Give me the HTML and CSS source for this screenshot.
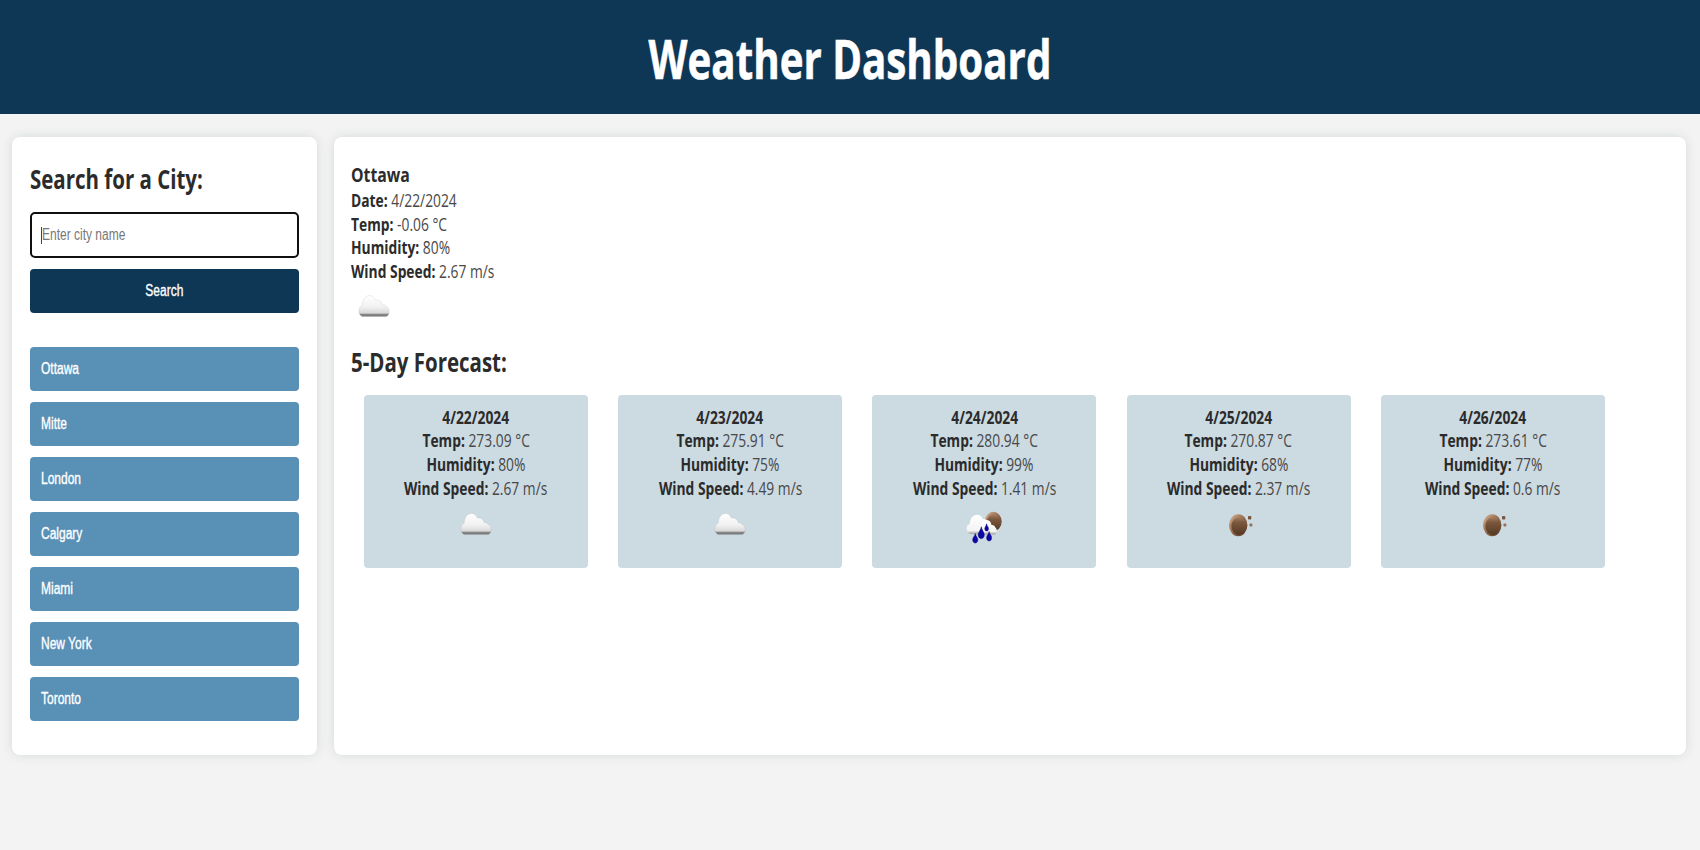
FILE: index.html
```
<!DOCTYPE html>
<html lang="en">
<head>
<meta charset="utf-8">
<title>Weather Dashboard</title>
<link rel="stylesheet" href="styles.css">
</head>
<body>
<svg class="defs" width="0" height="0" aria-hidden="true">
  <defs>
    <linearGradient id="cloudFill" x1="0" y1="0" x2="0" y2="1">
      <stop offset="0" stop-color="#fff"/><stop offset=".55" stop-color="#f1f1f1"/><stop offset=".84" stop-color="#d8d8d8"/><stop offset=".89" stop-color="#888"/><stop offset="1" stop-color="#777"/>
    </linearGradient>
    <linearGradient id="whiteFill" x1="0" y1="0" x2="0" y2="1">
      <stop offset="0" stop-color="#fff"/><stop offset=".8" stop-color="#f4f4f4"/><stop offset="1" stop-color="#999"/>
    </linearGradient>
    <linearGradient id="moonRim" x1="0" y1="0" x2="1" y2="1">
      <stop offset="0" stop-color="#d9b597"/><stop offset=".5" stop-color="#94684a"/><stop offset="1" stop-color="#4b3120"/>
    </linearGradient>
    <linearGradient id="moonFill" x1="0" y1="0" x2="0" y2="1">
      <stop offset="0" stop-color="#a58063"/><stop offset=".3" stop-color="#7b573d"/><stop offset="1" stop-color="#553923"/>
    </linearGradient>
    <symbol id="cloud" viewBox="0 0 48 54">
      <path d="M12 34.500C10 33.500 8.800 31.300 8.900 28.500C9 25.700 10.300 24.100 12.200 23.300C12.400 17.500 15.500 13.600 19.500 13.600C22.300 13.600 24.300 15.200 25.400 18C28.800 17.400 31.600 19.300 32.300 22.800C34.200 22.400 35.600 23 36 24.600C38 25 39.200 27 39.200 29.500C39.200 32 38 34 36.400 34.500Z" fill="url(#cloudFill)" stroke="#999" stroke-opacity=".25" stroke-width=".7"/>
    </symbol>
    <symbol id="moon" viewBox="0 0 48 54">
      <ellipse cx="23.200" cy="25.300" rx="9.200" ry="11" fill="url(#moonRim)"/>
      <ellipse cx="23.800" cy="26" rx="7.400" ry="9" fill="url(#moonFill)"/>
      <rect x="33" y="16" width="3.300" height="3.600" rx=".8" fill="#7b573f"/>
      <rect x="34.500" y="23.500" width="2.800" height="3" rx=".8" fill="#946f57"/>
    </symbol>
    <symbol id="rain" viewBox="0 0 48 54">
      <ellipse cx="33.300" cy="21.500" rx="8.400" ry="9.700" fill="url(#moonRim)"/>
      <ellipse cx="33.700" cy="22.500" rx="7" ry="8.200" fill="url(#moonFill)"/>
      <path d="M10 34C7.800 33 6.500 31 6.600 28.600C6.700 26 8 24.400 9.900 23.800C10 18.500 13 14.800 17 14.800C19.600 14.800 21.700 16.300 22.800 19C26 18.600 28.500 21 29 25C28.500 31 26 34 23 34.500Z" fill="url(#whiteFill)"/>
      <path d="M19.500 34.500C17.500 33 17.800 28.500 20.500 27.800C21 23 23.300 20 26.500 20C29 20 31 21.800 31.500 25C33.500 24.700 35 26 35.300 27.500C37.300 28.500 37.400 33.500 35 34.500Z" fill="url(#whiteFill)"/>
      <g fill="#0c08ac" stroke="#070569" stroke-width=".5">
        <path d="M21.300 26.800C21 30 18 32.500 18.200 35C18.400 37.600 20 38.600 21.300 38.600C22.700 38.600 24.200 37.400 24.300 35C24.400 32.500 21.600 30 21.300 26.800Z"/>
        <path d="M26.600 23.800C26.300 26 24.800 27 24.800 28.700C24.800 30.300 25.700 31 26.600 31C27.600 31 28.500 30.300 28.500 28.700C28.500 27 26.900 26 26.600 23.800Z"/>
        <path d="M15.300 33.600C15 36 12.700 37.500 12.700 39.700C12.700 41.800 14 43 15.300 43C16.600 43 17.800 41.800 17.800 39.700C17.800 37.500 15.500 36 15.300 33.600Z"/>
        <path d="M29.100 31.600C28.800 34 26.600 35.500 26.600 37.700C26.600 39.800 27.900 40.900 29.100 40.900C30.400 40.900 31.600 39.800 31.600 37.700C31.600 35.500 29.400 34 29.100 31.600Z"/>
      </g>
    </symbol>
  </defs>
</svg>
<header class="header"><h1 class="title">Weather Dashboard</h1></header>
<main class="layout">
  <aside class="panel sidebar">
    <h2 class="heading search-heading">Search for a City:</h2>
    <div class="field"><span class="caret"></span><span class="placeholder">Enter city name</span></div>
    <button class="btn search-btn"><span class="btn-text">Search</span></button>
    <div class="history">
      <button class="btn city"><span class="btn-text">Ottawa</span></button>
      <button class="btn city"><span class="btn-text">Mitte</span></button>
      <button class="btn city"><span class="btn-text">London</span></button>
      <button class="btn city"><span class="btn-text">Calgary</span></button>
      <button class="btn city"><span class="btn-text">Miami</span></button>
      <button class="btn city"><span class="btn-text">New York</span></button>
      <button class="btn city"><span class="btn-text">Toronto</span></button>
    </div>
  </aside>
  <section class="panel content">
    <h3 class="city-name">Ottawa</h3>
    <p class="line"><b>Date:</b> 4/22/2024</p>
    <p class="line"><b>Temp:</b> -0.06 °C</p>
    <p class="line"><b>Humidity:</b> 80%</p>
    <p class="line"><b>Wind Speed:</b> 2.67 m/s</p>
    <svg class="icon"><use href="#cloud"/></svg>
    <h2 class="heading forecast-heading">5-Day Forecast:</h2>
    <div class="cards">
      <article class="card">
        <p class="line"><b>4/22/2024</b></p>
        <p class="line"><b>Temp:</b> 273.09 °C</p>
        <p class="line"><b>Humidity:</b> 80%</p>
        <p class="line"><b>Wind Speed:</b> 2.67 m/s</p>
        <svg class="icon"><use href="#cloud"/></svg>
      </article>
      <article class="card">
        <p class="line"><b>4/23/2024</b></p>
        <p class="line"><b>Temp:</b> 275.91 °C</p>
        <p class="line"><b>Humidity:</b> 75%</p>
        <p class="line"><b>Wind Speed:</b> 4.49 m/s</p>
        <svg class="icon"><use href="#cloud"/></svg>
      </article>
      <article class="card">
        <p class="line"><b>4/24/2024</b></p>
        <p class="line"><b>Temp:</b> 280.94 °C</p>
        <p class="line"><b>Humidity:</b> 99%</p>
        <p class="line"><b>Wind Speed:</b> 1.41 m/s</p>
        <svg class="icon"><use href="#rain"/></svg>
      </article>
      <article class="card">
        <p class="line"><b>4/25/2024</b></p>
        <p class="line"><b>Temp:</b> 270.87 °C</p>
        <p class="line"><b>Humidity:</b> 68%</p>
        <p class="line"><b>Wind Speed:</b> 2.37 m/s</p>
        <svg class="icon"><use href="#moon"/></svg>
      </article>
      <article class="card">
        <p class="line"><b>4/26/2024</b></p>
        <p class="line"><b>Temp:</b> 273.61 °C</p>
        <p class="line"><b>Humidity:</b> 77%</p>
        <p class="line"><b>Wind Speed:</b> 0.6 m/s</p>
        <svg class="icon"><use href="#moon"/></svg>
      </article>
    </div>
  </section>
</main>
</body>
</html>
```

FILE: styles.css
```
* { box-sizing: border-box; margin: 0; padding: 0; }
body {
  height: 850px;
  overflow: hidden;
  background: #f3f3f3;
  color: #2b2b2b;
  font-family: "Open Sans", "Noto Sans", sans-serif;
}
.defs { display: block; }
.header {
  height: 114px;
  padding-top: 20px;
  background: #0e3655;
  color: #fff;
  text-align: center;
}
.title { font-size: 54px; line-height: 76px; font-weight: 700; white-space: nowrap; transform: scaleX(.746); -webkit-text-stroke: .6px #fff; }
.layout { display: flex; gap: 17.500px; padding: 23px 14px 0 12px; }
.panel {
  height: 617.500px;
  background: #fff;
  border-radius: 8px;
  box-shadow: 0 0 12px rgba(10, 50, 60, .12);
}
.sidebar { width: 304.500px; padding: 24px 18px 0; }
.content { flex: 1; padding: 24px 17px 0; }
.heading { font-size: 26px; line-height: 36px; font-weight: 700; white-space: nowrap; transform: scaleX(.787); transform-origin: left; }
.field {
  display: flex;
  align-items: center;
  height: 46px;
  margin-top: 15px;
  padding-left: 9px;
  border: 2px solid #101010;
  border-radius: 5px;
}
.caret { width: 1px; height: 17px; background: #444; }
.placeholder {
  font: 16px "Liberation Sans", Arial, sans-serif;
  color: #777;
  white-space: nowrap;
  transform: scaleX(.75);
  transform-origin: left;
}
.btn {
  display: flex;
  align-items: center;
  width: 100%;
  height: 44px;
  border: 0;
  border-radius: 4px;
  color: #fff;
  font: 16px "Liberation Sans", Arial, sans-serif;
}
.btn-text { transform: scaleX(.75); transform-origin: left; -webkit-text-stroke: .35px #fff; }
.search-btn { justify-content: center; margin-top: 11px; background: #0e3655; }
.search-btn .btn-text { transform-origin: center; }
.history { display: grid; gap: 11px; margin-top: 34px; }
.city { padding-left: 11px; background: #5990b6; }
.city-name { margin-bottom: 1px; font-size: 20px; line-height: 27px; font-weight: 700; transform: scaleX(.79); transform-origin: left; }
.line { font-size: 17.300px; line-height: 23.600px; white-space: nowrap; color: #484848; transform: scaleX(.8); transform-origin: left; }
.line b { font-weight: 700; color: #2b2b2b; }
.icon { display: block; width: 48px; height: 54px; }
.content > .icon { margin: -1px 0 0 -1px; }
.forecast-heading { margin-top: 8px; }
.cards { display: flex; gap: 30.200px; margin: 15px 0 0 13px; }
.card {
  display: flex;
  flex-direction: column;
  align-items: center;
  width: 224px;
  height: 173px;
  padding-top: 10.500px;
  border-radius: 4px;
  background: #ccdae2;
}
.card .line { transform-origin: center; }
```
